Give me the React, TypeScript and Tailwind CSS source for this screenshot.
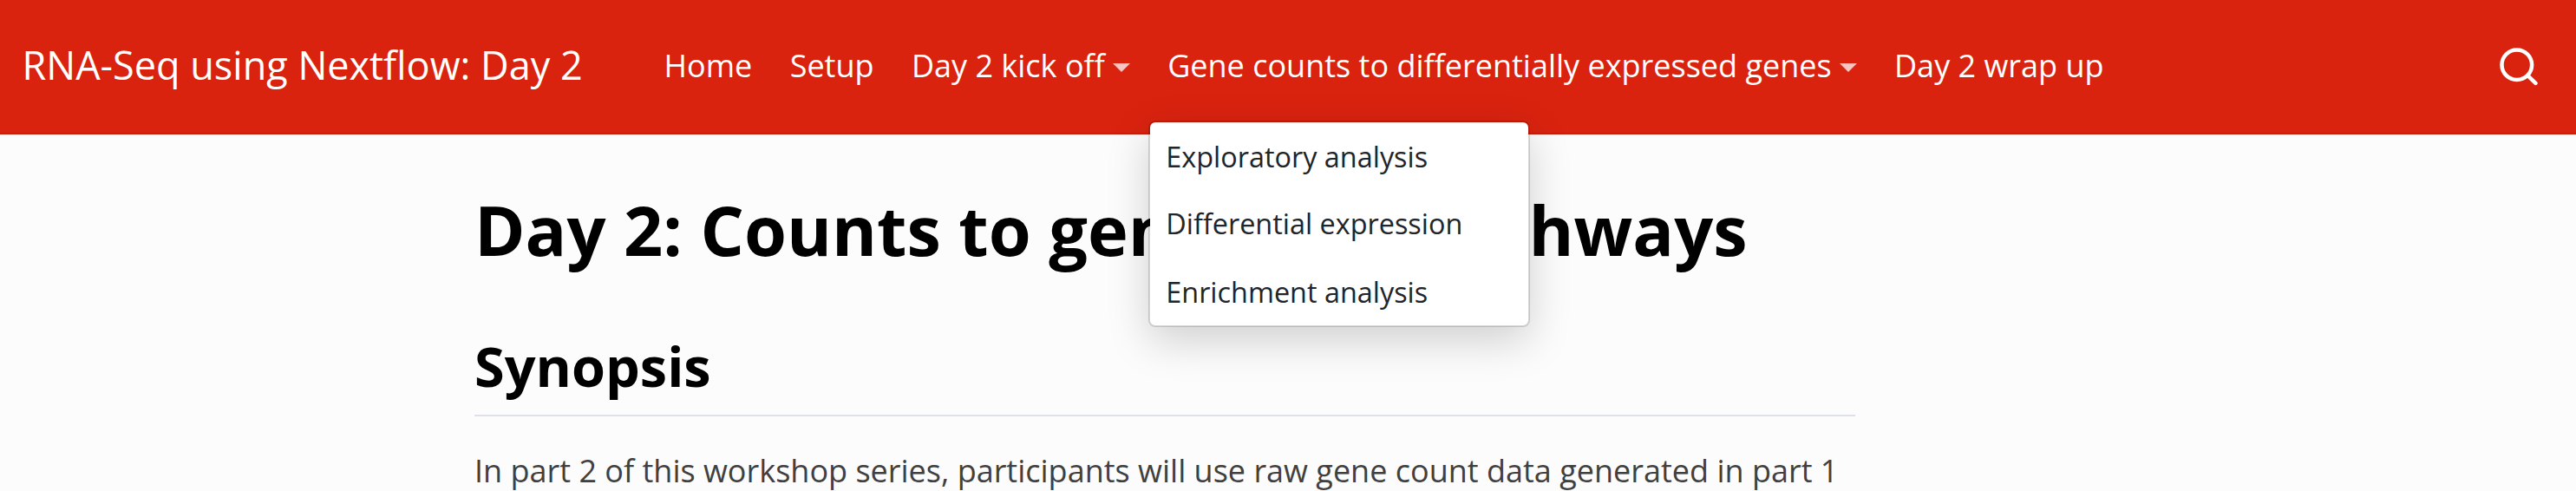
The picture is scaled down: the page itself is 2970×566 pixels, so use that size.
import React from "react";

const menuItems = ["Exploratory analysis", "Differential expression", "Enrichment analysis"];

function Caret() {
  return (
    <svg className="ml-[9px] mt-[4px] h-[10px] w-5 shrink-0" viewBox="0 0 20 10" aria-hidden="true">
      <path d="M0 0H20L10 10Z" fill="#ffffff" fillOpacity="0.75" />
    </svg>
  );
}

function NavLink({ label, caret = false }: { label: string; caret?: boolean }) {
  return (
    <a className="flex items-center whitespace-nowrap pt-[2px] text-[36px] leading-[54px] text-white">
      <span>{label}</span>
      {caret && <Caret />}
    </a>
  );
}

function DropdownMenu() {
  return (
    <ul className="absolute left-[-22.4px] top-[92px] z-10 flex h-[238px] w-[440px] flex-col rounded-[8px] border-2 border-black/15 bg-white bg-clip-padding shadow-[0_16px_48px_rgba(0,0,0,0.175)]">
      {menuItems.map((item) => (
        <li key={item} className="flex h-[78px] items-center whitespace-nowrap pl-[18.5px] text-[32.4px] leading-[48px] text-[#212529] even:pb-[2px]">
          {item}
        </li>
      ))}
    </ul>
  );
}

export default function App() {
  return (
    <div className="h-[566px] w-[2970px] overflow-hidden bg-[#fcfcfc] font-['Open_Sans',sans-serif]">
      <header className="flex h-[155px] items-center border-b-2 border-[#c3200e] bg-[#d9230f] pb-[3px] pl-[25.5px] pr-[43px]">
        <span className="w-[740px] whitespace-nowrap text-[45px] leading-[68px] text-white">RNA-Seq using Nextflow: Day 2</span>
        <nav className="flex flex-1 items-center gap-[43.4px]">
          <NavLink label="Home" />
          <NavLink label="Setup" />
          <NavLink label="Day 2 kick off" caret />
          <div className="relative">
            <NavLink label="Gene counts to differentially expressed genes" caret />
            <DropdownMenu />
          </div>
          <NavLink label="Day 2 wrap up" />
        </nav>
        <svg
          className="mt-[3px] h-[45px] w-[46px] shrink-0"
          viewBox="0 0 46 45"
          fill="none"
          stroke="#ffffff"
          strokeWidth="4.5"
          strokeLinecap="round"
          aria-label="Search"
        >
          <circle cx="20.8" cy="20.7" r="17.3" />
          <path d="M33.3 33.2L42.4 41.9" />
        </svg>
      </header>
      <main className="ml-[547px] w-[1592px] pt-[62px]">
        <h1 className="whitespace-nowrap text-[79.2px] font-bold leading-[95px] text-black">Day 2: Counts to genes and pathways</h1>
        <h2 className="mt-[72px] h-[96px] whitespace-nowrap border-b-2 border-[#dee2e6] text-[63px] font-bold leading-[76px] text-black">Synopsis</h2>
        <p className="mt-[33px] whitespace-nowrap text-[36px] leading-[60px] text-[#404040]">
          In part 2 of this workshop series, participants will use raw gene count data generated in part 1
        </p>
      </main>
    </div>
  );
}
